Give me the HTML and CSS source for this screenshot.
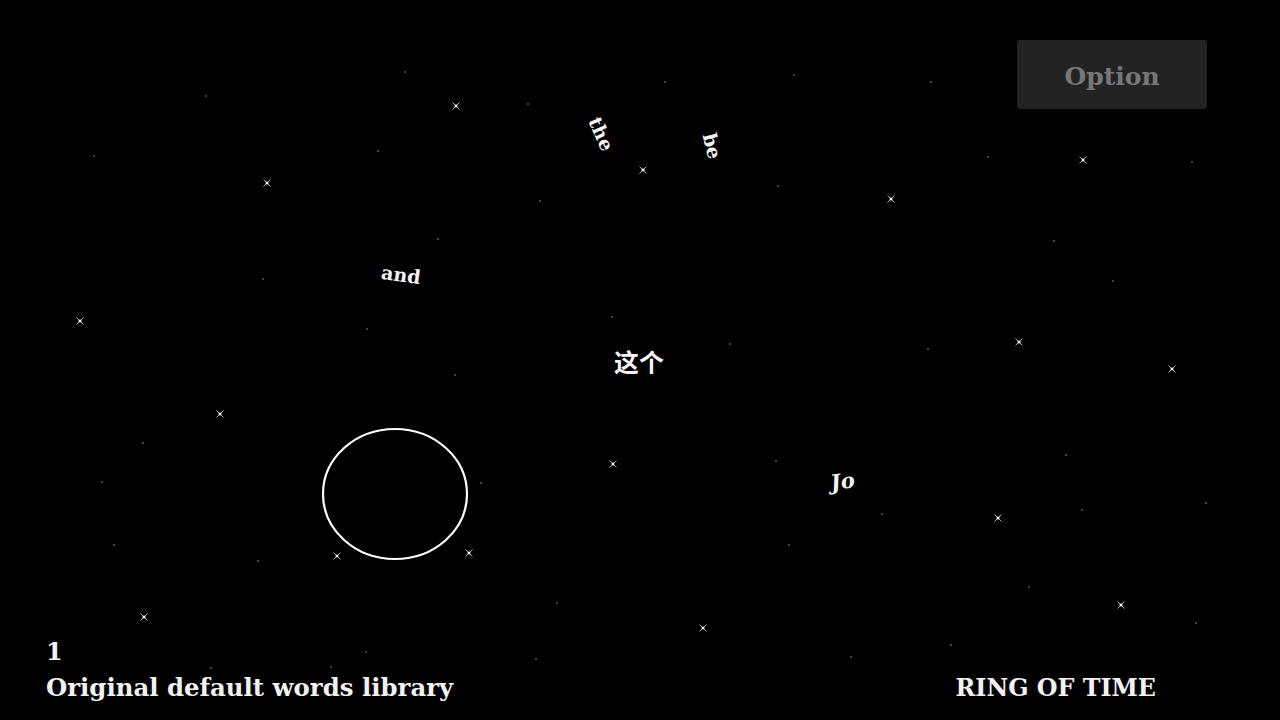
FILE: index.html
```html
<!DOCTYPE html>
<html lang="en">
<head>
<meta charset="utf-8">
<title>Ring of Time</title>
<link rel="stylesheet" href="styles.css">
</head>
<body>
<main class="stage">
  <svg class="sky" width="1280" height="720" viewBox="0 0 1280 720">
    <defs>
      <g id="spark">
        <path d="M-3.5 -3.5L3.5 3.5M3.5 -3.5L-3.5 3.5" stroke="#b0b0b0" stroke-width="1"/>
        <rect x="-1.3" y="-1.3" width="2.6" height="2.6" fill="#fff"/>
      </g>
      <g id="dot">
        <rect x="-0.7" y="-0.7" width="1.4" height="1.4" fill="#8a8a8a"/>
      </g>
    </defs>
    <g class="sparks">
      <use href="#spark" x="456" y="106"/>
      <use href="#spark" x="267" y="183"/>
      <use href="#spark" x="643" y="170"/>
      <use href="#spark" x="891" y="199"/>
      <use href="#spark" x="1083" y="160"/>
      <use href="#spark" x="80" y="321"/>
      <use href="#spark" x="1019" y="342"/>
      <use href="#spark" x="1172" y="369"/>
      <use href="#spark" x="220" y="414"/>
      <use href="#spark" x="613" y="464"/>
      <use href="#spark" x="998" y="518"/>
      <use href="#spark" x="337" y="556"/>
      <use href="#spark" x="469" y="553"/>
      <use href="#spark" x="144" y="617"/>
      <use href="#spark" x="703" y="628"/>
      <use href="#spark" x="1121" y="605"/>
    </g>
    <g class="dots">
      <use href="#dot" x="405" y="72"/>
      <use href="#dot" x="206" y="96"/>
      <use href="#dot" x="528" y="104"/>
      <use href="#dot" x="665" y="82"/>
      <use href="#dot" x="794" y="75"/>
      <use href="#dot" x="931" y="82"/>
      <use href="#dot" x="94" y="156"/>
      <use href="#dot" x="378" y="151"/>
      <use href="#dot" x="540" y="201"/>
      <use href="#dot" x="778" y="186"/>
      <use href="#dot" x="988" y="157"/>
      <use href="#dot" x="1192" y="162"/>
      <use href="#dot" x="438" y="239"/>
      <use href="#dot" x="1054" y="241"/>
      <use href="#dot" x="263" y="279"/>
      <use href="#dot" x="1113" y="281"/>
      <use href="#dot" x="612" y="317"/>
      <use href="#dot" x="367" y="329"/>
      <use href="#dot" x="730" y="344"/>
      <use href="#dot" x="928" y="349"/>
      <use href="#dot" x="455" y="375"/>
      <use href="#dot" x="143" y="443"/>
      <use href="#dot" x="346" y="446"/>
      <use href="#dot" x="776" y="461"/>
      <use href="#dot" x="1066" y="455"/>
      <use href="#dot" x="102" y="482"/>
      <use href="#dot" x="481" y="483"/>
      <use href="#dot" x="882" y="514"/>
      <use href="#dot" x="1082" y="510"/>
      <use href="#dot" x="1206" y="503"/>
      <use href="#dot" x="114" y="545"/>
      <use href="#dot" x="258" y="561"/>
      <use href="#dot" x="789" y="545"/>
      <use href="#dot" x="1029" y="587"/>
      <use href="#dot" x="557" y="603"/>
      <use href="#dot" x="1196" y="623"/>
      <use href="#dot" x="211" y="668"/>
      <use href="#dot" x="331" y="667"/>
      <use href="#dot" x="366" y="652"/>
      <use href="#dot" x="536" y="659"/>
      <use href="#dot" x="851" y="657"/>
      <use href="#dot" x="951" y="645"/>
    </g>
    <ellipse class="ring" cx="395" cy="494" rx="72" ry="65"/>
  </svg>

  <span class="word w-the">the</span>
  <span class="word w-be">be</span>
  <span class="word w-and">and</span>
  <span class="word w-zh">这个</span>
  <span class="word w-jo">Jo</span>

  <header class="topbar">
    <button class="option-btn" type="button">Option</button>
  </header>

  <footer class="footer">
    <div class="library">
      <div class="lib-num">1</div>
      <div class="lib-name">Original default words library</div>
    </div>
    <div class="title">RING OF TIME</div>
  </footer>
</main>
</body>
</html>
```

FILE: styles.css
```css
html, body {
  margin: 0;
  padding: 0;
  background: #000;
}

body {
  font-family: "DejaVu Serif", "Liberation Serif", "Noto Sans CJK SC", serif;
  color: #fff;
}

.stage {
  position: relative;
  width: 1280px;
  height: 720px;
  overflow: hidden;
  background: #000;
  display: flex;
  flex-direction: column;
  justify-content: space-between;
}

.sky {
  position: absolute;
  left: 0;
  top: 0;
}

.ring {
  fill: none;
  stroke: #fff;
  stroke-width: 2.2;
}

.topbar {
  position: relative;
  display: flex;
  justify-content: flex-end;
  padding: 40px 73px 0 0;
}

.option-btn {
  width: 190px;
  height: 69px;
  border: none;
  border-radius: 3px;
  background: #232323;
  color: #777;
  font-family: "DejaVu Serif", "Liberation Serif", serif;
  font-weight: bold;
  font-size: 25px;
  padding: 3px 0 0;
}

.footer {
  position: relative;
  display: flex;
  justify-content: space-between;
  align-items: flex-end;
  padding: 0 124px 12px 46px;
  font-weight: bold;
  color: #f2f2f2;
}

.lib-num {
  font-size: 24px;
  line-height: 32px;
}

.lib-name {
  font-size: 24.4px;
  line-height: 40px;
}

.title {
  font-size: 23.8px;
  line-height: 40px;
}

.word {
  position: absolute;
  font-weight: bold;
  font-size: 19px;
  line-height: 1;
  white-space: nowrap;
  color: #f4f4f4;
  transform: translate(-50%, -50%);
}

.w-the { left: 601px; top: 134px; transform: translate(-50%, -50%) rotate(66deg); }
.w-be  { left: 712px; top: 146px; transform: translate(-50%, -50%) rotate(76deg); }
.w-and { left: 401px; top: 275px; transform: translate(-50%, -50%) rotate(8deg); }
.w-zh  { left: 639px; top: 361px; font-size: 25px; font-family: "Noto Sans CJK SC", sans-serif; }
.w-jo  { left: 843px; top: 481px; font-size: 21px; transform: translate(-50%, -50%) rotate(-8deg) skewX(-10deg); }
```
